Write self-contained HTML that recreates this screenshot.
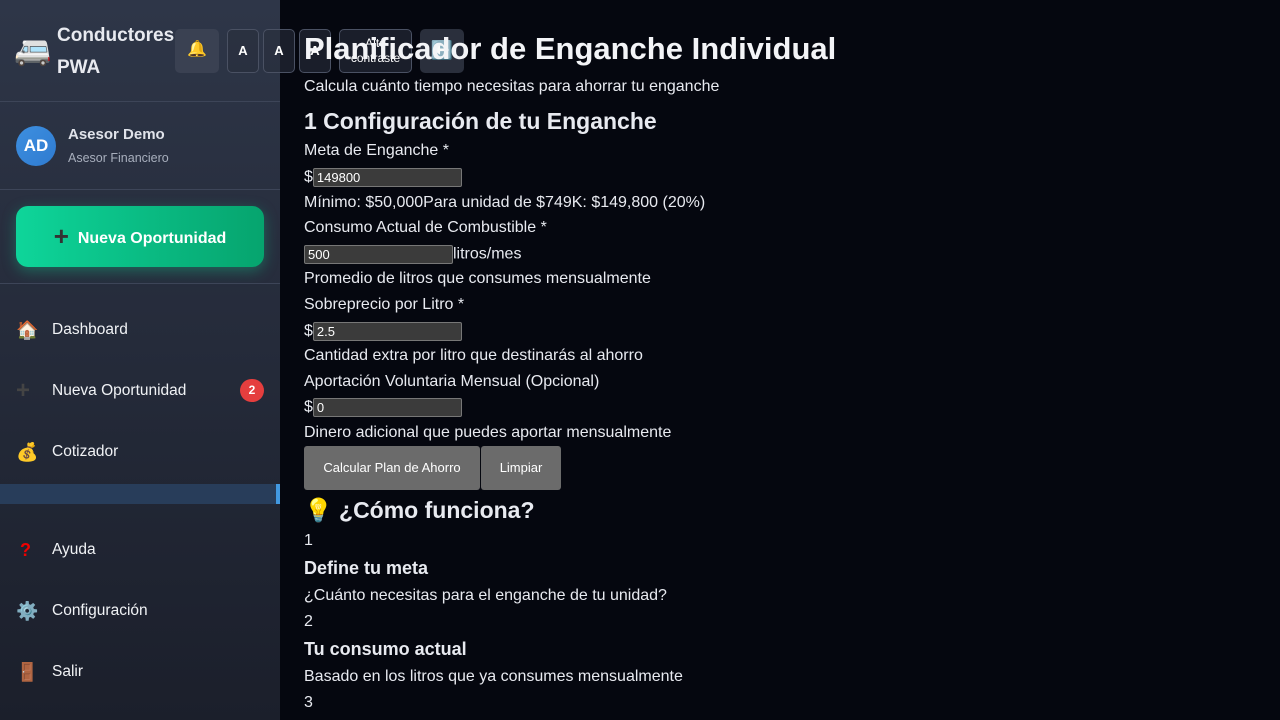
<!DOCTYPE html>
<html><head><meta charset="utf-8"><style>
*{box-sizing:border-box;margin:0;padding:0}
body{width:1280px;height:720px;overflow:hidden;background:#05070f;font-family:"Liberation Sans",sans-serif;color:#e8eaf0;position:relative}
.sb{position:absolute;left:0;top:0;width:280px;height:720px;background:linear-gradient(180deg,#2e3648,#1b1f2b)}
.a{position:absolute;white-space:nowrap}
.hr{position:absolute;left:0;width:280px;height:1px;background:#3d4558}
.nav{position:absolute;left:16px;font-size:15.5px;color:#f0f2f5;line-height:20px;height:20px}
.nav span{display:inline-block;width:36px;font-size:18px;line-height:20px;vertical-align:top}
.m{position:absolute;left:304px;font-size:16px;color:#e8eaf0;white-space:nowrap}
.in{display:inline-block;background:#3b3b3b;border:1px solid #777;border-radius:2px;height:19px;font-size:13px;color:#fff;padding:2px 3px;vertical-align:middle;line-height:14px}
.btn{position:absolute;background:#6b6b6b;color:#fff;font-size:13px;text-align:center;line-height:44px;height:44px;border-radius:3px}
.tb{position:absolute;top:29px;height:44px;border:1px solid #4a5163;border-radius:5px;background:rgba(40,46,60,.6);color:#fff;font-size:13px;font-weight:bold;text-align:center;line-height:42px}
</style></head><body>
<div class="sb"></div>
<div class="a" style="left:14px;top:33px;font-size:30px">🚐</div>
<div class="a" style="left:57px;top:20px;font-size:19px;font-weight:bold;line-height:32px;color:#e8eaf0">Conductores<br>PWA</div>
<div class="hr" style="top:101px"></div>
<div class="a" style="left:16px;top:126px;width:40px;height:40px;border-radius:50%;background:linear-gradient(135deg,#3d8fe0,#2f7bd0);color:#fff;font-weight:bold;font-size:17px;text-align:center;line-height:40px">AD</div>
<div class="a" style="left:68px;top:126px;font-size:15px;font-weight:bold;color:#e0e3ea">Asesor Demo</div>
<div class="a" style="left:68px;top:151px;font-size:12.5px;color:#a8afbd">Asesor Financiero</div>
<div class="hr" style="top:189px"></div>
<div class="a" style="left:16px;top:206px;width:248px;height:61px;border-radius:12px;background:linear-gradient(90deg,#0ed59a,#06a46e);box-shadow:0 4px 14px rgba(16,213,150,.35);color:#fff;font-weight:bold;font-size:16px;text-align:center;line-height:61px"><span style="color:#333;font-size:26px;font-weight:bold;vertical-align:-2px">+</span>&nbsp; Nueva Oportunidad</div>
<div class="hr" style="top:283px"></div>
<div class="nav" style="top:320px"><span>🏠</span>Dashboard</div>
<div class="nav" style="top:381px"><span style="color:#444;font-weight:bold;font-size:24px">+</span>Nueva Oportunidad</div>
<div class="a" style="left:240px;top:379px;width:24px;height:23px;border-radius:12px;background:#e53e3e;color:#fff;font-size:12px;font-weight:bold;text-align:center;line-height:23px">2</div>
<div class="nav" style="top:442px"><span>💰</span>Cotizador</div>
<div class="a" style="left:0;top:484px;width:280px;height:20px;background:#283d5a"></div>
<div class="a" style="left:276px;top:484px;width:4px;height:20px;background:#4299e1"></div>
<div class="nav" style="top:540px"><span style="color:#e00;font-weight:bold;padding-left:4px">?</span>Ayuda</div>
<div class="nav" style="top:601px"><span>⚙️</span>Configuración</div>
<div class="nav" style="top:662px"><span>🚪</span>Salir</div>

<div class="tb" style="left:175px;width:44px;background:#3a4152;border:none;font-size:16px">🔔</div>
<div class="tb" style="left:227px;width:32px">A</div>
<div class="tb" style="left:263px;width:32px">A</div>
<div class="tb" style="left:299px;width:32px">A</div>
<div class="tb" style="left:339px;width:73px;font-size:12px;font-weight:normal;line-height:15px;padding-top:6px">Alto<br>contraste</div>
<div class="tb" style="left:420px;width:44px;background:#2a2f3c;border:none;font-size:18px">⬅️</div>

<div class="m" style="top:31px;font-size:31px;font-weight:bold;color:#f3f4f7">Planificador de Enganche Individual</div>
<div class="m" style="top:78px">Calcula cuánto tiempo necesitas para ahorrar tu enganche</div>
<div class="m" style="top:108px;font-size:23px;font-weight:bold">1 Configuración de tu Enganche</div>
<div class="m" style="top:142px">Meta de Enganche *</div>
<div class="m" style="top:168px">$<span class="in" style="width:149px">149800</span></div>
<div class="m" style="top:194px">Mínimo: $50,000Para unidad de $749K: $149,800 (20%)</div>
<div class="m" style="top:219px">Consumo Actual de Combustible *</div>
<div class="m" style="top:245px"><span class="in" style="width:149px">500</span>litros/mes</div>
<div class="m" style="top:270px">Promedio de litros que consumes mensualmente</div>
<div class="m" style="top:296px">Sobreprecio por Litro *</div>
<div class="m" style="top:322px">$<span class="in" style="width:149px">2.5</span></div>
<div class="m" style="top:347px">Cantidad extra por litro que destinarás al ahorro</div>
<div class="m" style="top:373px">Aportación Voluntaria Mensual (Opcional)</div>
<div class="m" style="top:398px">$<span class="in" style="width:149px">0</span></div>
<div class="m" style="top:424px">Dinero adicional que puedes aportar mensualmente</div>
<div class="btn" style="left:304px;top:446px;width:176px">Calcular Plan de Ahorro</div>
<div class="btn" style="left:481px;top:446px;width:80px">Limpiar</div>
<div class="m" style="top:497px;font-size:23px;font-weight:bold">💡 ¿Cómo funciona?</div>
<div class="m" style="top:532px">1</div>
<div class="m" style="top:558px;font-size:18px;font-weight:bold">Define tu meta</div>
<div class="m" style="top:587px">¿Cuánto necesitas para el enganche de tu unidad?</div>
<div class="m" style="top:613px">2</div>
<div class="m" style="top:639px;font-size:18px;font-weight:bold">Tu consumo actual</div>
<div class="m" style="top:668px">Basado en los litros que ya consumes mensualmente</div>
<div class="m" style="top:694px">3</div>
</body></html>
